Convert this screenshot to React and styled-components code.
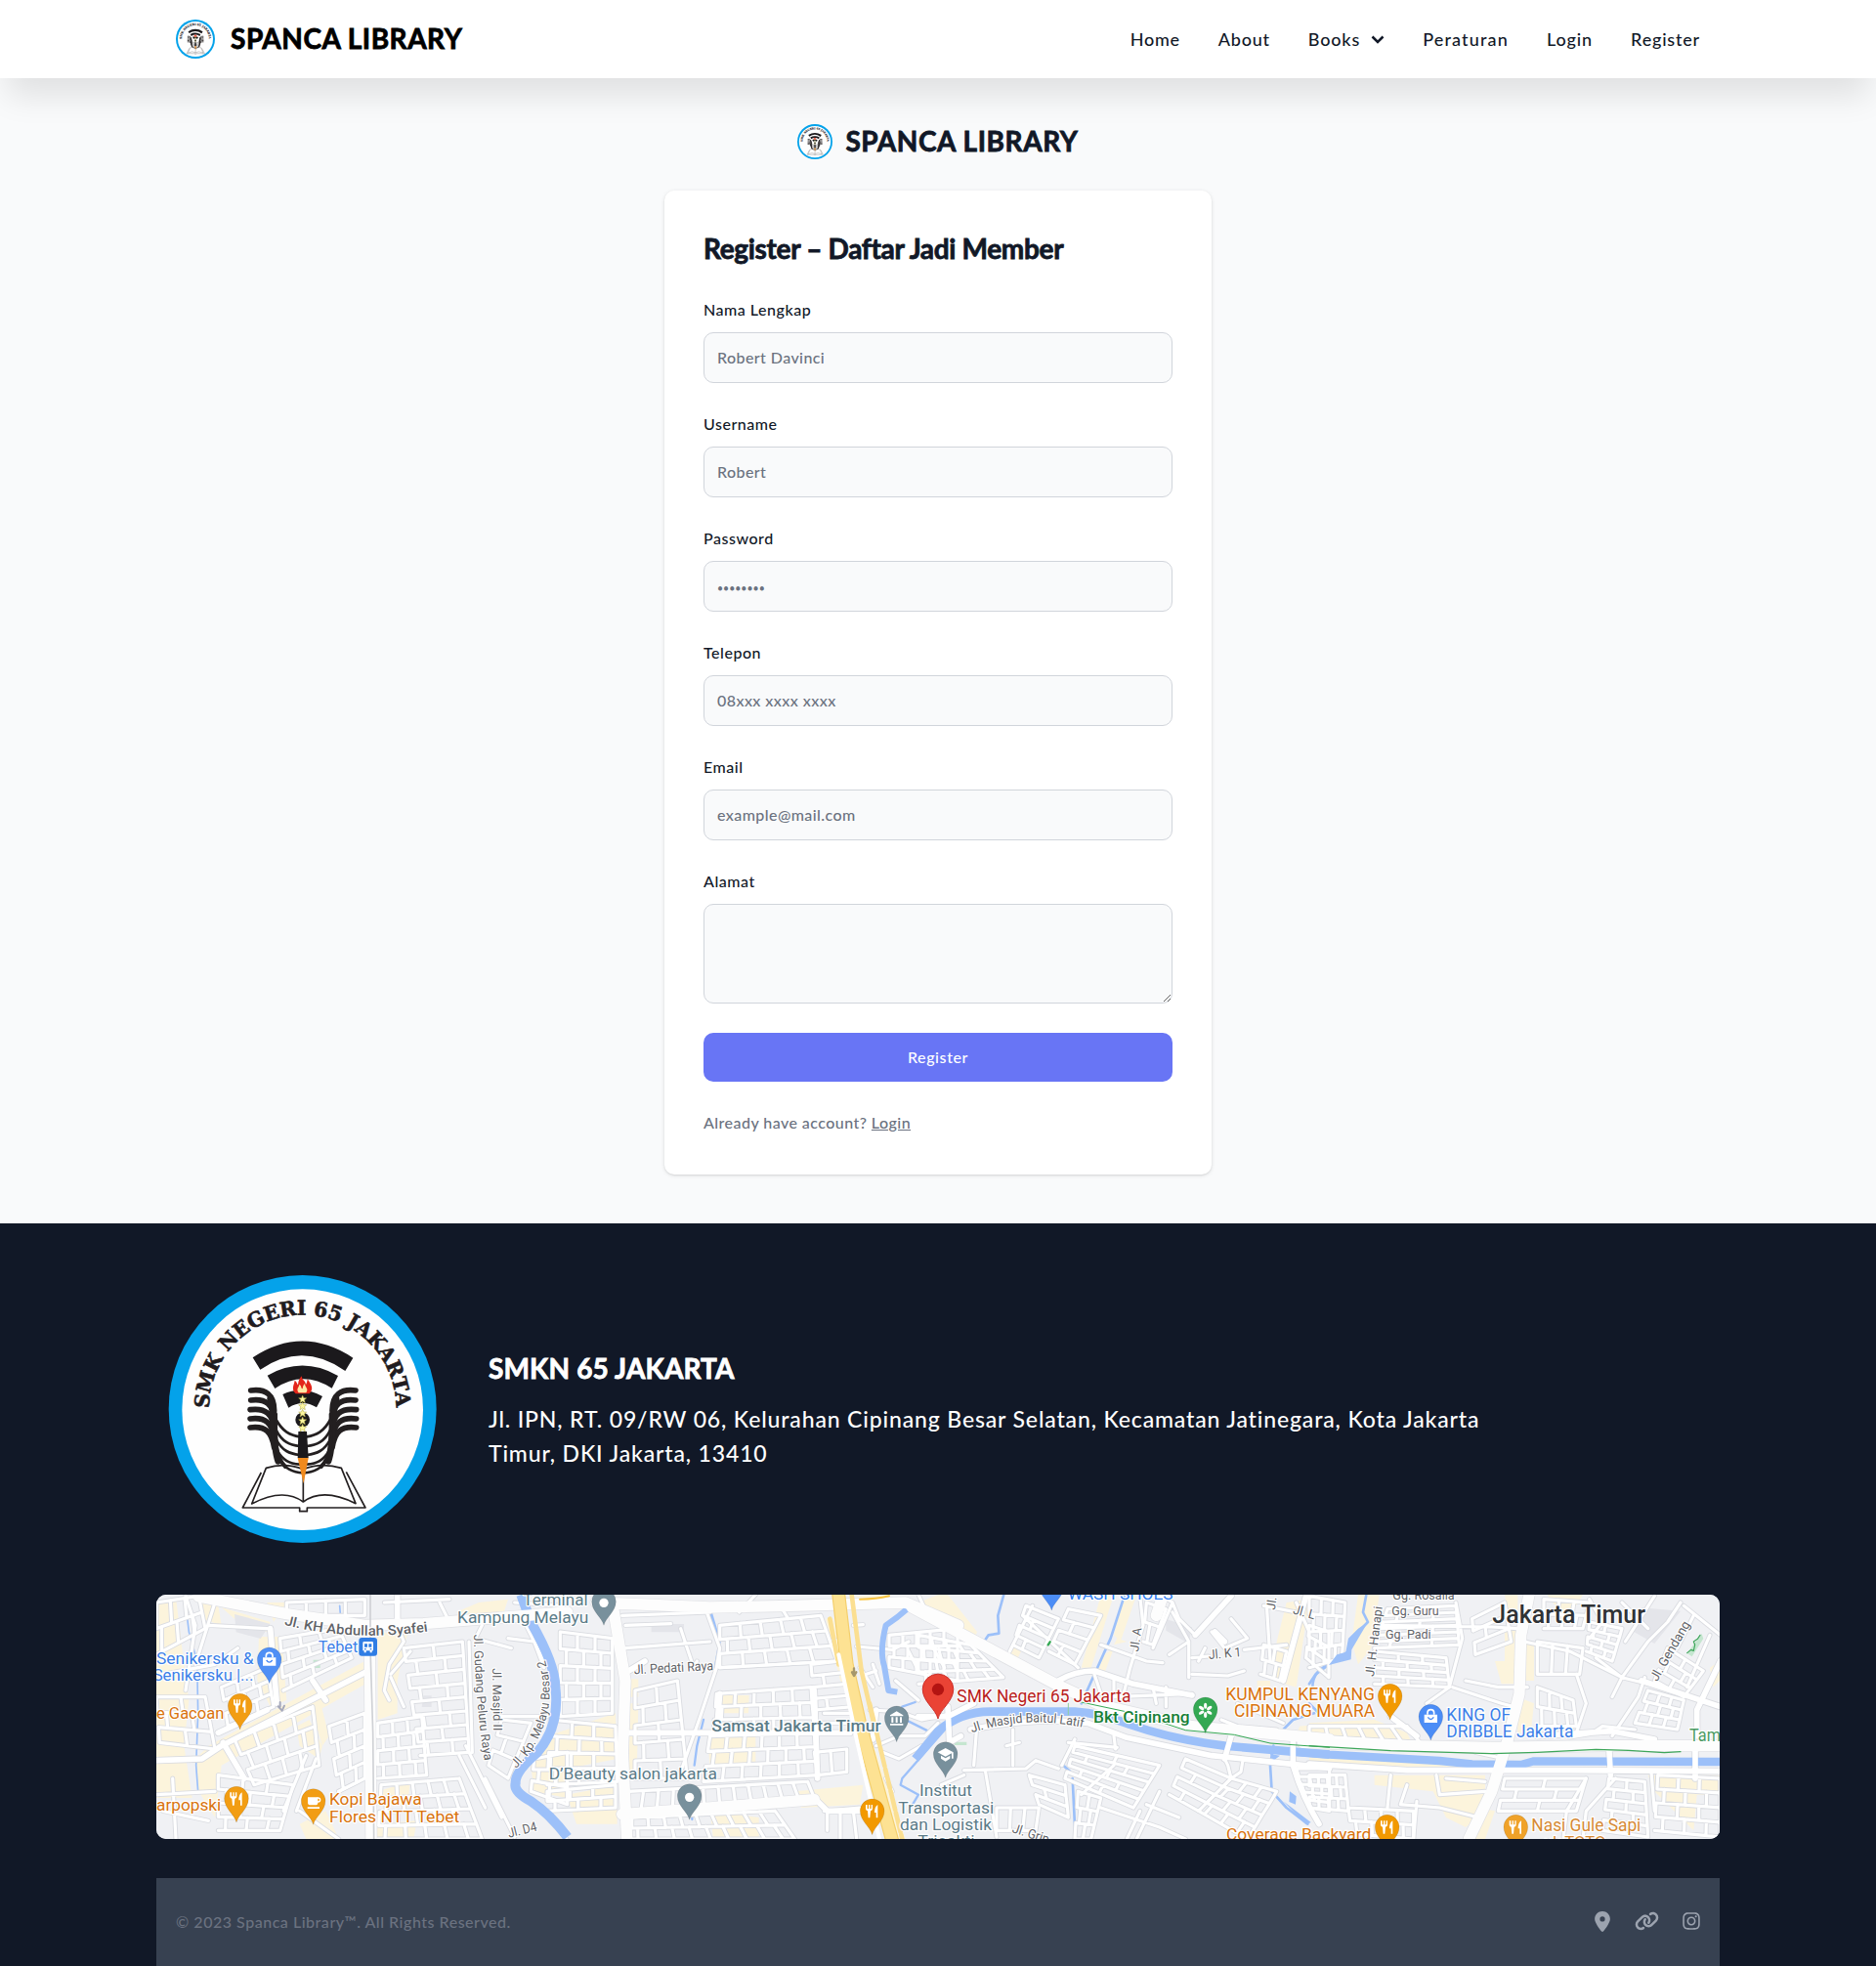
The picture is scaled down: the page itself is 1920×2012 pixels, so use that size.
import React from "react";
import styled, { createGlobalStyle } from "styled-components";
import { FaLocationDot, FaInstagram } from "react-icons/fa6";

const GlobalStyle = createGlobalStyle`
  *, *::before, *::after { box-sizing: border-box; }
  body {
    margin: 0;
    background: #111827;
    color: #111827;
    font-family: Lato, "Open Sans", sans-serif;
    font-weight: 500;
    font-size: 16px;
    letter-spacing: 0.52px;
  }
`;

const Header = styled.header`
  position: relative;
  z-index: 1;
  height: 80px;
  background: #fff;
  box-shadow: 0 25px 33px -7px rgba(0, 0, 0, 0.1);
`;

const Container = styled.div`
  width: 1600px;
  margin: 0 auto;
`;

const HeaderInner = styled(Container)`
  height: 80px;
  padding: 0 20px;
  display: flex;
  align-items: center;
  justify-content: space-between;
`;

const Brand = styled.a`
  display: flex;
  align-items: center;
  gap: ${(p) => p.$gap}px;
  color: ${(p) => p.$color};
  font-size: 28px;
  line-height: 34px;
  font-weight: 700;
  letter-spacing: ${(p) => p.$tracking}px;
  -webkit-text-stroke: 0.8px currentColor;
`;

const BrandName = styled.span`
  padding-bottom: 2px;
`;

const Nav = styled.nav`
  display: flex;
  align-items: center;
  gap: 39px;
`;

const NavLink = styled.a`
  display: flex;
  align-items: center;
  gap: 11px;
  font-size: 18px;
  line-height: 28px;
  letter-spacing: ${(p) => p.$tracking}px;
`;

const Main = styled.main`
  height: 1172px;
  padding-top: 47px;
  background: #f9fafb;
  display: flex;
  flex-direction: column;
  align-items: center;
  gap: 32px;
`;

const Card = styled.form`
  width: 560px;
  padding: 40px 40px 41px;
  display: flex;
  flex-direction: column;
  gap: 30px;
  background: #fff;
  border-radius: 10px;
  box-shadow: 0 1px 4px rgba(0, 0, 0, 0.1), 0 1px 2px rgba(0, 0, 0, 0.08);
`;

const CardTitle = styled.h1`
  margin: 0;
  padding-bottom: 1px;
  font-size: 28px;
  line-height: 39px;
  font-weight: 700;
  letter-spacing: -0.33px;
  -webkit-text-stroke: 0.8px currentColor;
`;

const Field = styled.label`
  display: flex;
  flex-direction: column;
  gap: 11px;
  line-height: 24px;
`;

const inputLook = `
  width: 100%;
  margin: 0;
  padding: 0 13px 2px;
  border: 1px solid #d1d5db;
  border-radius: 10px;
  background: #f9fafb;
  font: inherit;
  letter-spacing: 0.42px;
  outline: none;
`;

const Input = styled.input`
  ${inputLook}
  height: 52px;
  &::placeholder { color: #6b7280; opacity: 1; }
  &[type="password"]::placeholder {
    font-size: 10.5px;
    letter-spacing: 0;
  }
`;

const TextArea = styled.textarea`
  ${inputLook}
  display: block;
  height: 102px;
`;

const SubmitButton = styled.button`
  height: 50px;
  padding: 0 0 2px;
  border: 0;
  border-radius: 10px;
  background: #6875f5;
  color: #fff;
  font: inherit;
  letter-spacing: 0.6px;
`;

const Hint = styled.p`
  margin: 0;
  line-height: 24px;
  color: #6b7280;
  letter-spacing: 0.45px;
`;

const HintLink = styled.a`
  text-decoration: underline;
`;

const Footer = styled.footer`
  height: 760px;
  padding-top: 40px;
  background: #111827;
`;

const FooterInner = styled(Container)`
  display: flex;
  flex-direction: column;
  gap: 40px;
`;

const School = styled.section`
  display: flex;
  align-items: center;
  gap: 40px;
  color: #fff;
`;

const SchoolText = styled.div`
  width: 1060px;
  display: flex;
  flex-direction: column;
  gap: 15px;
`;

const SchoolName = styled.h2`
  margin: 0;
  font-size: 28px;
  line-height: 40px;
  font-weight: 700;
  letter-spacing: 0.15px;
  -webkit-text-stroke: 0.8px currentColor;
`;

const Address = styled.p`
  margin: 0;
  font-size: 23px;
  line-height: 35px;
  letter-spacing: 0.85px;
`;

const MapFrame = styled.div`
  height: 250px;
  border-radius: 10px;
  overflow: hidden;
  background: #eff0f3;
`;

const BottomBar = styled.div`
  height: 90px;
  padding: 0 20px 2px;
  display: flex;
  align-items: center;
  justify-content: space-between;
  background: #374151;
  color: #6b7280;
`;

const Socials = styled.div`
  display: flex;
  align-items: center;
  gap: 24.5px;
  color: #9ca3af;
`;

const SocialIcon = styled.a`
  svg {
    display: block;
    width: ${(p) => p.$w}px;
    height: ${(p) => p.$h}px;
  }
`;

/* ---------- school emblem ---------- */

const fingers = [398, 428, 457, 485, 512];

function Wing() {
  return (
    <g fill="none" stroke="#231f20" strokeLinecap="round">
      {fingers.map((y, i) => (
        <path
          key={y}
          strokeWidth="17"
          d={`M${290 - (i > 1 ? 2 : 0)} ${y} C335 ${y - 6} ${362 - i * 2} ${y + 12} 362 ${y + 62}`}
        />
      ))}
      <path strokeWidth="20" d="M350 425 C366 470 354 560 374 615" />
      <path strokeWidth="12" d="M366 470 C366 560 365 600 396 632" />
      <path strokeWidth="8" d="M368 488 C388 524 410 536 440 540 M368 520 C386 556 410 566 440 569 M368 548 C386 584 410 592 440 596 M370 580 C388 614 410 622 440 625 M378 610 C396 640 420 650 450 651" />
    </g>
  );
}

const star = "M0 -12 L3.500 -4 12 -3.500 5.500 2 8 11 0 6 -8 11 -5.500 2 -12 -3.500 -3.500 -4Z";

function Emblem({ size, id, tight }) {
  return (
    <svg width={size} height={size} viewBox={tight ? "38 44 822 822" : "0 5 900 900"}>
      <circle cx="449" cy="455" r="411" fill="#04a2ea" />
      <circle cx="449" cy="457" r="370" fill="#fefefe" />
      <path id={id} d="M162 453 A287 287 0 0 1 736 453" fill="none" />
      <text
        fontFamily="'DejaVu Serif','Liberation Serif',serif"
        fontWeight="700"
        fontSize="62"
        fill="#1f1b1e"
        stroke="#1f1b1e"
        strokeWidth="2"
        letterSpacing="0"
      >
        <textPath href={`#${id}`} textLength="898" lengthAdjust="spacingAndGlyphs">SMK NEGERI 65 JAKARTA</textPath>
      </text>
      <g fill="#1b191c">
        <path d="M296 297 Q449 196 604 298 L580 338 Q449 246 319 334Z" />
        <path d="M341 352 Q449 291 558 353 L539 391 Q449 334 364 392Z" />
        <path d="M388 410 Q449 382 510 416 L492 450 Q449 424 406 451Z" />
      </g>
      <g fill="#fff" stroke="#231f20" strokeWidth="5" strokeLinejoin="round">
        <path d="M322 650 L265 758 H440 V769 H463 V758 H642 L583 648" />
        <path d="M337 636 L293 746 Q390 695 451 740 Q512 695 612 745 L568 636 Q505 618 451 640 Q395 618 337 636Z" />
        <path d="M451 640 V740" />
      </g>
      <Wing />
      <g transform="translate(902 0) scale(-1 1)"><Wing /></g>
      <circle cx="449" cy="488" r="22" fill="#1b191c" />
      <path d="M436 524 H462 L467 605 H434Z" fill="#1b191c" />
      <path d="M434 605 H467 L452 684Z" fill="#f08a1d" />
      <path d="M428 408 C412 392 424 380 425 367 C433 374 432 378 435 381 C436 367 440 360 447 354 C446 368 458 366 459 380 C463 375 463 369 464 363 C474 378 486 392 470 408Z" fill="#e3261b" />
      <path d="M437 405 C428 393 438 389 439 379 C447 384 443 391 449 393 C450 385 452 380 456 377 C456 388 469 392 460 405Z" fill="#ffe9a6" />
      {[425, 446, 468, 491, 513].map((y) => (
        <path key={y} d={star} transform={`translate(449 ${y})`} fill="#fdf7a0" stroke="#a9a33c" strokeWidth="1.500" />
      ))}
    </svg>
  );
}

/* ---------- map ---------- */

// Four sheets laid side by side; each has its own horizontal origin.
const SHEETS = [0, 1200, 2340, 3540];

const mix = (a, b, t) => [a[0] + (b[0] - a[0]) * t, a[1] + (b[1] - a[1]) * t];

// Street grid filling the quad a-b-c-d with n streets along and m across.
function grid(a, b, c, d, n, m) {
  let out = "";
  for (let i = 0; i <= n; i++) {
    const p = mix(a, d, i / n);
    const q = mix(b, c, i / n);
    out += `M${p.map(Math.round).join(" ")}L${q.map(Math.round).join(" ")}`;
  }
  for (let j = 0; j < n; j++) {
    for (let k = 0; k <= m; k++) {
      const t = Math.min(1, (k + (j % 2 ? 0.35 : 0)) / m);
      const p = mix(mix(a, d, j / n), mix(b, c, j / n), t);
      const q = mix(mix(a, d, (j + 1) / n), mix(b, c, (j + 1) / n), t);
      out += `M${p.map(Math.round).join(" ")}L${q.map(Math.round).join(" ")}`;
    }
  }
  return out;
}

const blocks = [
  [
    "M0 60 L60 45 80 210 100 360 85 500 110 660 0 660Z M130 60 L190 70 200 130 140 110Z M200 75 L350 120 340 150 240 110Z M315 165 L385 165 400 360 350 380 310 300Z M160 500 L640 240 660 300 200 560 180 720 130 640 120 540Z M680 150 L770 160 740 300 740 400 680 420Z M990 60 L1080 50 1060 110 920 90Z M430 440 L470 420 510 500 500 540 440 500Z M1180 500 L1260 470 1260 660 1160 640 1150 560Z M440 740 L520 700 560 786 460 786Z M680 640 L780 610 770 690 690 670Z M340 60 L400 60 360 120Z",
    "M470 370 L500 350 530 470 510 500Z M680 740 L800 730 790 786 670 786Z",
  ],
  [
    "M0 470 L210 400 215 540 110 560 0 580Z M60 650 L215 620 215 740 90 740Z M255 370 L280 370 275 600 250 600Z M525 345 L620 345 618 400 530 400Z M490 460 L640 440 640 560 500 560Z M855 110 L880 110 930 340 900 300Z M500 700 L650 720 650 786 510 786Z M760 640 L970 620 960 680 780 690Z M1010 520 L1100 786 1070 786 990 480Z M940 40 L1050 36 1000 56Z M1130 60 L1260 100 1260 170 1150 100Z",
    "M255 295 L280 295 280 350 250 350Z",
  ],
  [
    "M0 60 L60 36 90 36 180 150 170 180 60 110Z M290 190 L320 200 300 240 280 220Z M560 36 L600 36 530 260 500 260Z M630 36 L670 36 620 180 600 160Z M570 220 L600 200 570 280 550 270Z M1130 60 L1200 50 1160 320 1090 300 1100 180Z M1170 440 L1260 430 1260 470 1160 470Z M1040 300 L1080 300 1080 330 1040 330Z",
    "M640 180 L610 170 600 190Z",
  ],
  [
    "M150 36 L215 36 190 200 150 250 130 180Z M600 140 L640 140 635 310 590 310 570 240 600 240Z M660 180 L690 180 690 300 660 300Z M640 350 L690 370 680 460 640 460Z M0 430 L200 420 300 460 320 500 0 480Z M200 590 L540 590 540 640 520 720 480 750 420 720 380 640 200 620Z M1040 590 L1260 590 1260 650 1190 650 1180 760 1060 640Z M600 36 L640 36 640 100 610 100Z M1230 260 L1260 240 1260 300 1240 320Z M0 520 L560 560 540 580 0 545Z M730 36 L840 36 800 100 770 90Z",
    "M520 690 L570 700 540 786 490 786Z",
  ],
];

const water = [
  ["M1120 36 L1150 120 Q1225 250 1225 320 Q1240 440 1170 520 Q1100 580 1103 615 Q1095 640 1150 670 Q1210 710 1262 780", 30],
  ["M1105 80 L1075 105 1040 130 Q1020 210 1035 255 L1048 330 1075 335", 18],
  ["M-10 540 L60 455 Q130 395 220 395 L480 395 Q560 400 650 435 Q780 480 940 500 L1140 517 1262 527", 26],
  ["M-60 517 L60 527 400 546 500 556 650 558 690 547 1262 549", 25],
];
const streams = [
  ["M88 50 L100 150 125 240 128 400 122 560 128 640 M563 70 L566 110"],
  ["M500 80 L530 180 515 260 M480 420 L460 500 452 560 M1090 380 L1130 366 M1110 425 L1170 455 M445 690 V726 M1230 440 L1090 600 1085 620 1140 650 1110 700 M500 90 L520 150"],
  ["M262 36 L244 100 247 155 215 160 205 175 M632 40 L590 170 545 270 500 370 M1262 250 Q1210 270 1210 320 M1215 400 L1150 420 1110 460 M445 560 L465 578 M473 600 L482 786 M1090 500 L1080 560 1085 640 1130 690 1195 740"],
  ["M175 36 L165 90 180 120 150 150 M120 210 L60 250 20 280 0 310 M0 370 L30 400"],
];
const lakes = ["", "", "M1080 525 L1110 530 1090 545Z M1140 640 L1160 655 1158 680 1138 672Z M1120 670 L1205 735 1190 742Z", "M150 140 L180 120 130 205 128 235 60 252 85 220 112 212 120 170Z"];

const minor = [
  [
    grid([380, 170], [560, 140], [600, 230], [390, 330], 4, 3),
    grid([760, 200], [940, 180], [960, 520], [810, 530], 8, 2),
    grid([680, 430], [815, 410], [830, 590], [680, 600], 4, 3),
    grid([240, 480], [480, 380], [500, 560], [300, 620], 3, 4),
    grid([0, 60], [130, 40], [150, 140], [0, 220], 2, 3),
    grid([0, 350], [150, 350], [180, 510], [10, 490], 3, 2),
    grid([190, 590], [420, 620], [380, 760], [190, 760], 4, 3),
    grid([690, 620], [930, 600], [1000, 786], [680, 786], 4, 5),
    grid([1060, 420], [1150, 430], [1080, 600], [1020, 560], 3, 1),
    grid([1160, 540], [1262, 520], [1262, 680], [1150, 640], 3, 2),
    grid([400, 60], [640, 50], [640, 100], [400, 100], 1, 4),
    grid([530, 440], [640, 400], [640, 600], [560, 640], 4, 2),
    grid([200, 320], [340, 260], [360, 380], [220, 440], 3, 3),
    "M20 280 L180 250 250 200 M160 130 L340 140 M180 60 L120 250 M90 40 L120 130 90 330 M0 650 L180 640 M20 700 L160 730 M50 600 L60 786 M720 290 L760 380 M720 280 L780 210 M735 120 L760 180 715 250 700 330 715 360 M1000 130 L980 170 1090 200 M960 180 L970 520 M1010 600 L1100 780 M950 500 L1060 720 M930 530 L1010 690 M560 640 L620 610 M700 60 L900 50 M870 60 L900 120 M1080 170 L1160 180 1190 260 M1100 60 L1250 70 M1050 410 L1200 410 M1130 120 L1190 240 M460 530 L390 700 M490 540 L430 700 M440 700 L560 786",
  ],
  [
    grid([40, 150], [200, 170], [200, 400], [40, 410], 5, 3),
    grid([10, 420], [210, 440], [215, 610], [0, 620], 4, 3),
    grid([270, 330], [400, 300], [430, 600], [270, 600], 5, 2),
    grid([530, 130], [840, 100], [890, 240], [530, 260], 3, 5),
    grid([520, 340], [810, 320], [820, 460], [510, 460], 3, 5),
    grid([500, 470], [820, 460], [830, 590], [480, 610], 3, 6),
    grid([810, 250], [900, 240], [940, 380], [820, 390], 4, 1),
    grid([250, 640], [800, 610], [820, 660], [240, 700], 1, 12),
    grid([260, 720], [700, 700], [760, 786], [260, 786], 2, 9),
    grid([0, 640], [210, 620], [210, 690], [0, 700], 2, 3),
    grid([1050, 160], [1260, 140], [1260, 300], [1050, 260], 3, 5),
    grid([820, 520], [920, 510], [920, 580], [830, 590], 1, 2),
    "M230 100 L500 90 M240 130 L380 125 M240 200 L500 180 M490 90 L530 200 520 260 470 410 410 580 M410 140 L450 260 460 240 M530 260 L890 240 M640 36 L590 90 M710 60 L740 110 M950 195 L1060 205 1110 180 M1110 210 L1140 270 M960 260 L1000 320 M1000 250 L1020 310 M980 280 L1010 270 M940 130 L970 128 M990 390 L1080 395 1150 420 1250 400 M1010 500 L1080 470 1160 470 1200 430 M1030 520 L1080 540 1150 500 M1040 600 L1060 640 M1070 300 L1140 360 M1140 36 L1160 80 M1180 190 L1220 260 M60 786 L0 720 M860 760 V700 M900 786 V710 M950 786 L940 700 M850 700 L960 690 M850 400 L930 400 M840 430 L930 430",
  ],
  [
    grid([330, 70], [430, 110], [370, 230], [290, 190], 4, 1),
    grid([460, 80], [560, 100], [480, 250], [400, 210], 4, 1),
    grid([700, 60], [760, 80], [720, 190], [690, 180], 2, 1),
    grid([0, 160], [160, 190], [260, 290], [0, 310], 4, 4),
    grid([480, 500], [740, 560], [660, 690], [450, 600], 5, 2),
    grid([820, 540], [960, 600], [860, 700], [770, 650], 4, 1),
    grid([960, 600], [1100, 640], [1010, 786], [860, 700], 4, 3),
    grid([340, 590], [450, 620], [460, 720], [370, 680], 3, 1),
    grid([1200, 130], [1260, 150], [1260, 290], [1190, 230], 3, 1),
    grid([1160, 570], [1262, 570], [1262, 700], [1200, 690], 5, 1),
    grid([240, 690], [370, 690], [360, 760], [240, 760], 1, 3),
    grid([490, 640], [560, 660], [530, 786], [480, 786], 3, 2),
    grid([1060, 190], [1130, 210], [1110, 300], [1050, 280], 2, 2),
    "M280 210 L350 70 M320 100 L490 260 M560 190 L700 240 750 245 M680 40 L690 130 650 260 630 340 M750 40 L780 60 720 200 M780 90 L830 180 770 220 M900 150 L940 200 1010 170 960 110 M830 180 V290 M840 280 L950 285 1000 270 M840 230 L890 225 M1000 205 L1130 190 M1070 80 L1080 240 M1060 70 L1160 90 M1160 60 L1200 150 M540 280 L560 340 M600 290 V340 M720 320 L730 370 M760 320 V380 M600 350 L840 340 M930 420 L980 440 1100 450 M980 370 L1120 430 M180 430 L170 560 M290 450 V560 M140 575 L330 570 360 545 430 570 M205 575 L240 780 M440 560 L480 480 M460 490 L610 505 M310 490 L270 500 M600 470 L605 510 M940 540 L950 560 960 600 990 580 995 550 M780 60 L800 110 850 160 M880 200 L860 240 M140 590 L70 620 M500 650 L600 560 M680 700 L640 786 M560 690 L740 750 820 786 M740 640 L670 786 M700 680 L800 720",
  ],
  [
    grid([240, 80], [450, 70], [460, 190], [200, 200], 6, 2),
    grid([200, 210], [420, 230], [430, 320], [200, 310], 4, 3),
    grid([860, 120], [960, 140], [930, 240], [850, 210], 4, 2),
    grid([700, 180], [840, 200], [830, 280], [700, 280], 1, 3),
    grid([700, 320], [810, 360], [820, 440], [700, 440], 2, 3),
    grid([1040, 330], [1150, 360], [1130, 450], [1000, 430], 3, 3),
    grid([1100, 200], [1210, 270], [1150, 350], [1060, 300], 3, 2),
    grid([600, 600], [850, 600], [820, 700], [580, 700], 3, 2),
    grid([920, 600], [1030, 610], [1040, 780], [900, 760], 5, 2),
    grid([1070, 590], [1262, 600], [1262, 780], [1060, 760], 4, 3),
    grid([0, 590], [110, 590], [120, 700], [0, 690], 3, 4),
    grid([120, 690], [320, 700], [320, 786], [130, 770], 2, 4),
    grid([500, 110], [600, 60], [620, 180], [510, 220], 3, 1),
    grid([0, 40], [110, 60], [100, 230], [0, 260], 4, 3),
    grid([0, 440], [300, 440], [340, 490], [0, 470], 1, 6),
    grid([720, 50], [860, 60], [840, 140], [720, 140], 2, 3),
    "M220 130 L560 135 640 140 M450 60 L470 170 430 320 360 370 M440 320 L590 370 630 380 M480 300 L580 320 670 320 M660 180 L800 210 960 290 1040 310 M960 290 L1040 180 1100 120 1140 60 M860 50 L900 120 860 170 M960 60 L1040 140 M1060 40 L970 180 M1150 70 L1262 160 M1230 160 L1160 320 M880 230 L960 290 930 350 M820 280 L850 370 820 460 M870 460 L900 440 1000 450 M930 470 L1010 350 1030 290 M300 620 L280 680 400 690 520 720 M250 590 L240 690 M390 590 L400 650 540 640 M330 670 L320 786 M420 600 L540 610 M850 600 L790 700 780 786 M940 600 L850 700 840 786 M1050 580 L1060 700 M510 520 L600 540 M1180 100 L1130 200",
  ],
];

const middle = [
  ["M0 545 L140 540 200 500 650 270 M190 460 L340 390 M205 490 L270 600 M480 300 L520 360 M350 140 L370 370 M740 36 L740 120"],
  ["M230 460 L930 460 M820 330 L830 600 M250 270 L300 240 M820 660 L860 700 980 700 M1010 390 L1000 480 M890 180 L920 300 1000 560 M520 460 L530 340"],
  ["M430 300 Q480 270 540 270 L660 310 840 345 M160 450 Q360 410 520 430 L640 475 900 530 1262 568 M960 470 L940 540 M90 380 L95 490 130 470 M1150 490 V560 Q1180 660 1230 740 M1190 40 L1120 300 M850 160 L960 40 M910 150 L940 180 M0 410 L90 410 170 370"],
  ["M0 555 L300 575 800 575 1262 578 M920 500 L925 590 M1185 510 V600 M1020 300 L1262 380 M1190 470 V390 L1262 240 M250 410 L330 470 M700 470 L930 455 1060 480 M800 470 L860 460"],
];

const major = [
  ["M130 42 L400 95 640 130 820 125 1262 90 M655 200 L660 786"],
  ["M150 60 L500 75 750 70 1100 60 1262 130 M200 60 L240 300 232 520 245 786 M230 710 L500 690 820 665"],
  ["M-20 75 L120 150 420 310 560 375 840 440 1262 480 M750 40 L730 100"],
  ["M-20 490 L300 500 560 505 900 500 1262 500 M675 36 L650 160 645 340 610 480 560 640 490 786"],
];

const forkKnife = "M-20 -92 V-79 Q-20 -74 -14 -73 L-12 -52 H-7 L-5 -73 Q1 -74 1 -79 V-92 H-3 V-80 H-7 V-92 H-11 V-80 H-15 V-92Z M17 -92 Q7 -86 7 -68 H12 V-52 H17Z";
const PIN = "M0 0 C-6 -25 -37 -42 -37 -73 A37 37 0 1 1 37 -73 C37 -42 6 -25 0 0Z";

function PinGlyph({ kind }) {
  if (kind === "food") return <path d={forkKnife} fill="#fff" />;
  if (kind === "dot") return <circle cy="-69" r="14" fill="#fff" />;
  if (kind === "bag")
    return (
      <>
        <path d="M-20 -79 H20 V-54 H-20Z" fill="#fff" />
        <path d="M-10 -79 V-84 Q-10 -94 0 -94 Q10 -94 10 -84 V-79" fill="none" stroke="#fff" strokeWidth="5" />
        <path d="M-9 -71 Q0 -58 9 -71" fill="none" stroke="#4285f4" strokeWidth="4" />
      </>
    );
  if (kind === "cup")
    return (
      <>
        <path d="M-17 -84 H14 V-68 Q14 -60 6 -60 H-8 Q-17 -60 -17 -68Z M-18 -54 H19 V-49 H-18Z" fill="#fff" />
        <circle cx="15" cy="-76" r="6" fill="none" stroke="#fff" strokeWidth="4" />
      </>
    );
  if (kind === "museum")
    return <path d="M0 -94 L20 -82 V-79 H-20 V-82Z M-16 -76 H-10 V-59 H-16Z M-3 -76 H3 V-59 H-3Z M10 -76 H16 V-59 H10Z M-20 -56 H20 V-51 H-20Z" fill="#fff" />;
  if (kind === "school")
    return <path d="M0 -91 L24 -78 V-59 H19 V-75 L0 -65 -24 -78Z M-14 -68 L0 -60 14 -68 V-59 L0 -50 -14 -59Z" fill="#fff" />;
  if (kind === "flower")
    return (
      <g fill="#fff" transform="translate(0 -70)">
        {[0, 60, 120, 180, 240, 300].map((a) => (
          <ellipse key={a} cy="-14" rx="4.800" ry="9" transform={`rotate(${a})`} />
        ))}
      </g>
    );
  return null;
}

const pins = [
  [0, 347, 308, "#4f8ff5", "bag"],
  [0, 257, 450, "#f29d13", "food"],
  [0, 246, 735, "#f29d13", "food"],
  [0, 482, 742, "#f29d13", "cup"],
  [1, 174, 130, "#78909c", "dot"],
  [1, 437, 727, "#78909c", "dot"],
  [1, 1073, 488, "#78909c", "museum"],
  [1, 998, 773, "#f29900", "food"],
  [2, 83, 598, "#78909c", "school"],
  [2, 409, 84, "#4c8df6", ""],
  [2, 881, 461, "#34a853", "flower"],
  [3, 248, 420, "#f29900", "food"],
  [3, 373, 483, "#4c8df6", "bag"],
  [3, 239, 822, "#f29900", "food"],
  [3, 634, 822, "#f0a229", "food"],
];

const BLUE = "#3c7fe8";
const ORANGE = "#d9730d";
const SLATE = "#5b7b88";
const GREY = "#5f6368";

// sheet, x, baseline, width, size, colour, text, weight, rotation
const labels = [
  [0, 497, 213, 122, 52, BLUE, "Tebet"],
  [0, 0, 248, 299, 52, BLUE, "Senikersku &"],
  [0, -10, 300, 308, 52, BLUE, "Senikersku |..."],
  [0, 0, 417, 208, 52, ORANGE, "e Gacoan"],
  [0, 0, 700, 199, 52, ORANGE, "arpopski"],
  [0, 531, 682, 284, 52, ORANGE, "Kopi Bajawa"],
  [0, 531, 734, 400, 52, ORANGE, "Flores NTT Tebet"],
  [0, 1126, 69, 199, 52, SLATE, "Terminal"],
  [0, 924, 122, 403, 52, SLATE, "Kampung Melayu"],
  [0, 1083, 782, 90, 40, GREY, "Jl. D4", 400, -14],
  [0, 1032, 262, 192, 38, GREY, "Jl. Masjid II", 400, 89],
  [1, 5, 604, 517, 52, SLATE, "D’Beauty salon jakarta"],
  [1, 505, 455, 520, 52, SLATE, "Samsat Jakarta Timur", 500],
  [1, 267, 280, 244, 40, GREY, "Jl. Pedati Raya", 400, -3],
  [2, 118, 366, 534, 54, "#b91c1c", "SMK Negeri 65 Jakarta"],
  [2, 537, 430, 296, 52, "#188038", "Bkt Cipinang", 500],
  [2, 458, 50, 324, 52, "#2f7df0", "WASH SHOES"],
  [2, 3, 655, 162, 52, SLATE, "Institut"],
  [2, -62, 707, 294, 52, SLATE, "Transportasi"],
  [2, -57, 759, 282, 52, SLATE, "dan Logistik"],
  [2, -2, 811, 175, 52, SLATE, "Trisakti"],
  [2, 286, 765, 116, 40, GREY, "Jl. Grip", 400, 18],
  [2, 675, 212, 74, 38, GREY, "Jl. A", 400, -82],
  [2, 892, 234, 100, 40, GREY, "Jl. K 1", 400, -5],
  [2, 1148, 94, 68, 40, GREY, "Jl. L", 400, 15],
  [2, 1094, 84, 40, 38, GREY, "Jl.", 400, -82],
  [2, 943, 360, 458, 54, ORANGE, "KUMPUL KENYANG"],
  [2, 969, 412, 432, 54, ORANGE, "CIPINANG MUARA"],
  [2, 945, 788, 445, 52, ORANGE, "Coverage Backyard"],
  [3, 256, 50, 190, 38, GREY, "Gg. Rosalia"],
  [3, 253, 98, 145, 38, GREY, "Gg. Guru"],
  [3, 234, 170, 140, 38, GREY, "Gg. Padi"],
  [3, 198, 288, 216, 38, GREY, "Jl. H. Hanapi", 400, -83],
  [3, 1068, 304, 205, 40, GREY, "Jl. Gendang", 400, -60],
  [3, 562, 124, 470, 75, "#303336", "Jakarta Timur", 500],
  [3, 421, 422, 197, 54, BLUE, "KING OF"],
  [3, 421, 474, 390, 54, BLUE, "DRIBBLE Jakarta"],
  [3, 1167, 486, 96, 54, "#4b9a63", "Tam"],
  [3, 682, 763, 336, 54, "#d68a35", "Nasi Gule Sapi"],
  [3, 720, 814, 190, 52, "#d68a35", "uk TOTO"],
];

// sheet, id, path, width, size, text, weight
const curved = [
  [0, "road-kh", "M392 128 Q600 182 840 148", 446, 42, "Jl. KH Abdullah Syafei", 500],
  [0, "road-gudang", "M975 158 Q980 380 1008 548", 390, 38, "Jl. Gudang Peluru Raya", 400],
  [0, "road-melayu", "M1105 570 Q1250 420 1190 225", 362, 38, "Jl. Kp. Melayu Besar 2", 400],
  [2, "road-baitul", "M164 460 Q330 405 505 444", 346, 40, "Jl. Masjid Baitul Latif", 400],
];

const Halo = styled.text`
  font-family: Roboto, "Liberation Sans", sans-serif;
  letter-spacing: 0;
  stroke: #fff;
  stroke-width: 7px;
  stroke-linejoin: round;
  paint-order: stroke;
`;

const MapCanvas = styled.svg`
  display: block;
  width: 1600px;
  height: 250px;
`;

function Sheets({ data, ...rest }) {
  return SHEETS.map((x, i) => (
    <g key={x} transform={`translate(${x} -36)`} {...rest}>
      {data[i].map((d, k) => (
        <path key={k} d={d} />
      ))}
    </g>
  ));
}

function StreetMap() {
  const line = { fill: "none", strokeLinejoin: "round", strokeLinecap: "round" };
  return (
    <MapCanvas viewBox="0 0 4800 750">
      <rect width="4800" height="750" fill="#f0f1f4" />
      <Sheets data={blocks} fill="#fcf4dc" />
      <path
        d="M240 60 L350 90 320 135 245 115Z M820 310 H845 V345 H815Z M1520 90 H1620 V115 H1520Z M3100 75 L3180 100 3170 150 3100 110Z M4560 40 L4680 50 4600 150 4530 110Z"
        fill="#e4e5ea"
      />
      <path d="M482 200 H503 V225 H482Z M2450 452 H2488 V462 H2450Z M4700 180 L4745 120 4750 135 4715 190Z" fill="#c5e6d0" />
      {streams.map(([d], i) => (
        <path key={i} d={d} {...line} stroke="#9cc0f9" strokeWidth={i === 0 ? 5 : i === 1 ? 7 : 8} transform={`translate(${SHEETS[i]} -36)`} />
      ))}
      <Sheets data={minor} {...line} stroke="#dadce1" strokeWidth="15" />
      <Sheets data={middle} {...line} stroke="#d9dbe0" strokeWidth="22" />
      <Sheets data={major} {...line} stroke="#dfe0e4" strokeWidth="38" />
      <Sheets data={minor} {...line} stroke="#fff" strokeWidth="9.500" />
      {water.map(([d, w], i) => (
        <path key={i} d={d} {...line} strokeLinecap="butt" stroke="#9cc0f9" strokeWidth={w} transform={`translate(${SHEETS[i]} -36)`} />
      ))}
      {lakes.map((d, i) => (
        <path key={i} d={d} fill="#9cc0f9" transform={`translate(${SHEETS[i]} -36)`} />
      ))}
      <Sheets data={middle} {...line} stroke="#fff" strokeWidth="17" />
      <Sheets data={major} {...line} stroke="#fdfdfd" strokeWidth="34" />
      <g transform="translate(0 -36)" {...line} stroke="#cfd1d5">
        <path d="M657 36 V200 L665 460 668 786" strokeWidth="5" />
      </g>
      <g transform="translate(1200 -36)" {...line}>
        <path d="M868 110 L895 250 M990 370 L1090 786" stroke="#fbdf91" strokeWidth="14" strokeDasharray="60 9" />
        <path d="M935 36 L965 270 1000 420" stroke="#fbdf91" strokeWidth="14" />
        <path d="M893 20 L920 250 960 430 1062 800" stroke="#f4cf6c" strokeWidth="42" />
        <path d="M893 20 L920 250 960 430 1062 800" stroke="#fde293" strokeWidth="35" />
        <path d="M895 220 L950 480 1020 786" stroke="#fff" strokeWidth="12" />
        <path d="M960 50 Q1010 50 1050 40" stroke="#f9c440" strokeWidth="6" />
        <path d="M942 262 V278 M936 274 L942 285 949 274" stroke="#a6976b" strokeWidth="7" />
      </g>
      <g transform="translate(2340 -36)" {...line} stroke="#34a853" strokeWidth="3">
        <path d="M500 366 L660 400 820 452 970 466 1080 492 1262 505" />
        <path d="M460 370 V405" stroke="#8fcfa0" />
        <path d="M398 190 L404 181" strokeWidth="7" />
      </g>
      <g transform="translate(3540 -36)" {...line} stroke="#3ea65a" strokeWidth="3.500">
        <path d="M0 500 L250 515 560 524 700 520 880 511 980 514 1090 521 1140 518" />
        <path d="M1160 215 L1172 205 1180 208 1184 190 1180 180 1192 172 1200 160" />
      </g>
      <path d="M380 330 V345 M374 343 L386 356 393 341" {...line} stroke="#a5a8bb" strokeWidth="6" />

      {labels.map(([s, x, y, w, size, fill, text, weight = 400, rot = 0]) => (
        <Halo
          key={`${text}${y}`}
          transform={`translate(${SHEETS[s] + x} ${y - 36}) rotate(${rot})`}
          fontSize={size}
          fontWeight={weight}
          fill={fill}
          textLength={w}
          lengthAdjust="spacingAndGlyphs"
        >
          {text}
        </Halo>
      ))}
      {curved.map(([s, id, d, w, size, text, weight]) => (
        <g key={id} transform={`translate(${SHEETS[s]} -36)`}>
          <path id={id} d={d} fill="none" />
          <Halo fontSize={size} fontWeight={weight} fill={GREY}>
            <textPath href={`#${id}`} textLength={w} lengthAdjust="spacingAndGlyphs">{text}</textPath>
          </Halo>
        </g>
      ))}

      {pins.map(([s, x, y, fill, kind]) => (
        <g key={`${s}-${x}`} transform={`translate(${SHEETS[s] + x} ${y - 36})`}>
          <path d={PIN} fill={fill} stroke="#00000026" strokeWidth="2" />
          <PinGlyph kind={kind} />
        </g>
      ))}
      <g transform="translate(2400 381)">
        <path d={PIN} transform="scale(1.28 1.25)" fill="#ea4335" stroke="#c5221f" strokeWidth="2" />
        <circle cy="-90" r="18.500" fill="#b31412" />
      </g>
      <g transform="translate(622 132)">
        <rect width="56" height="56" rx="9" fill="#2f7de4" />
        <path d="M16 12 H40 Q44 12 44 16 V40 H40 V46 H34 V40 H22 V46 H16 V40 H12 V16 Q12 12 16 12Z" fill="#fff" />
        <path d="M17 19 H26 V29 H17Z M30 19 H39 V29 H30Z M17 33 H22 V37 H17Z M34 33 H39 V37 H34Z" fill="#2f7de4" />
      </g>
    </MapCanvas>
  );
}

/* ---------- page ---------- */

function ChainIcon() {
  return (
    <svg viewBox="0 0 640 512" fill="currentColor">
      <path d="M579.8 267.7c56.5-56.5 56.5-148 0-204.5c-50-50-128.8-56.5-186.3-15.400l-1.600 1.100c-14.400 10.300-17.700 30.300-7.400 44.600s30.300 17.700 44.600 7.400l1.600-1.100c32.100-22.900 76-19.300 103.800 8.600c31.500 31.500 31.500 82.500 0 114L422.300 334.800c-31.500 31.500-82.500 31.500-114 0c-27.900-27.900-31.500-71.800-8.600-103.800l1.100-1.600c10.300-14.400 6.900-34.400-7.400-44.600s-34.400-6.900-44.600 7.400l-1.100 1.600C206.500 251.200 213 330 263 380c56.500 56.500 148 56.500 204.500 0L579.800 267.700zM60.200 244.300c-56.500 56.500-56.500 148 0 204.500c50 50 128.800 56.500 186.300 15.400l1.600-1.100c14.400-10.300 17.700-30.300 7.400-44.600s-30.300-17.700-44.600-7.400l-1.600 1.100c-32.100 22.900-76 19.300-103.800-8.600C74 372 74 321 105.500 289.500L217.700 177.200c31.500-31.500 82.500-31.500 114 0c27.900 27.900 31.500 71.800 8.600 103.900l-1.100 1.600c-10.300 14.400-6.900 34.400 7.400 44.600s34.400 6.900 44.600-7.400l1.100-1.600C433.500 260.800 427 182 377 132c-56.500-56.500-148-56.500-204.500 0L60.200 244.300z" />
    </svg>
  );
}

const navItems = [
  { text: "Home", tracking: 0.75 },
  { text: "About", tracking: 0.75 },
  { text: "Books", tracking: 0.85, menu: true },
  { text: "Peraturan", tracking: 1.15 },
  { text: "Login", tracking: 0.9 },
  { text: "Register", tracking: 0.8 },
];

const fields = [
  { label: "Nama Lengkap", placeholder: "Robert Davinci", type: "text" },
  { label: "Username", placeholder: "Robert", type: "text" },
  { label: "Password", placeholder: "••••••••", type: "password" },
  { label: "Telepon", placeholder: "08xxx xxxx xxxx", type: "text" },
  { label: "Email", placeholder: "example@mail.com", type: "email" },
];

export default function App() {
  return (
    <>
      <GlobalStyle />
      <Header>
        <HeaderInner>
          <Brand $gap={16} $color="#000" $tracking={0.52}>
            <Emblem size={40} id="arc-nav" tight />
            <BrandName>SPANCA LIBRARY</BrandName>
          </Brand>
          <Nav>
            {navItems.map((item) => (
              <NavLink key={item.text} $tracking={item.tracking}>
                {item.text}
                {item.menu && (
                  <svg width="14" height="9" viewBox="0 0 14 9">
                    <path d="M1.500 1.500 L7 7 L12.500 1.500" fill="none" stroke="#111827" strokeWidth="2.500" />
                  </svg>
                )}
              </NavLink>
            ))}
          </Nav>
        </HeaderInner>
      </Header>

      <Main>
        <Brand $gap={13} $color="#111827" $tracking={0.58}>
          <Emblem size={36} id="arc-form" tight />
          <BrandName>SPANCA LIBRARY</BrandName>
        </Brand>
        <Card>
          <CardTitle>Register – Daftar Jadi Member</CardTitle>
          {fields.map((f) => (
            <Field key={f.label}>
              {f.label}
              <Input type={f.type} placeholder={f.placeholder} />
            </Field>
          ))}
          <Field>
            Alamat
            <TextArea />
          </Field>
          <SubmitButton type="button">Register</SubmitButton>
          <Hint>
            Already have account? <HintLink>Login</HintLink>
          </Hint>
        </Card>
      </Main>

      <Footer>
        <FooterInner>
          <School>
            <Emblem size={300} id="arc-footer" />
            <SchoolText>
              <SchoolName>SMKN 65 JAKARTA</SchoolName>
              <Address>
                Jl. IPN, RT. 09/RW 06, Kelurahan Cipinang Besar Selatan, Kecamatan Jatinegara, Kota Jakarta
                Timur, DKI Jakarta, 13410
              </Address>
            </SchoolText>
          </School>
          <MapFrame>
            <StreetMap />
          </MapFrame>
          <BottomBar>
            <span>© 2023 Spanca Library™. All Rights Reserved.</span>
            <Socials>
              <SocialIcon $w={16} $h={21}><FaLocationDot /></SocialIcon>
              <SocialIcon $w={25} $h={20}><ChainIcon /></SocialIcon>
              <SocialIcon $w={18} $h={20}><FaInstagram /></SocialIcon>
            </Socials>
          </BottomBar>
        </FooterInner>
      </Footer>
    </>
  );
}
